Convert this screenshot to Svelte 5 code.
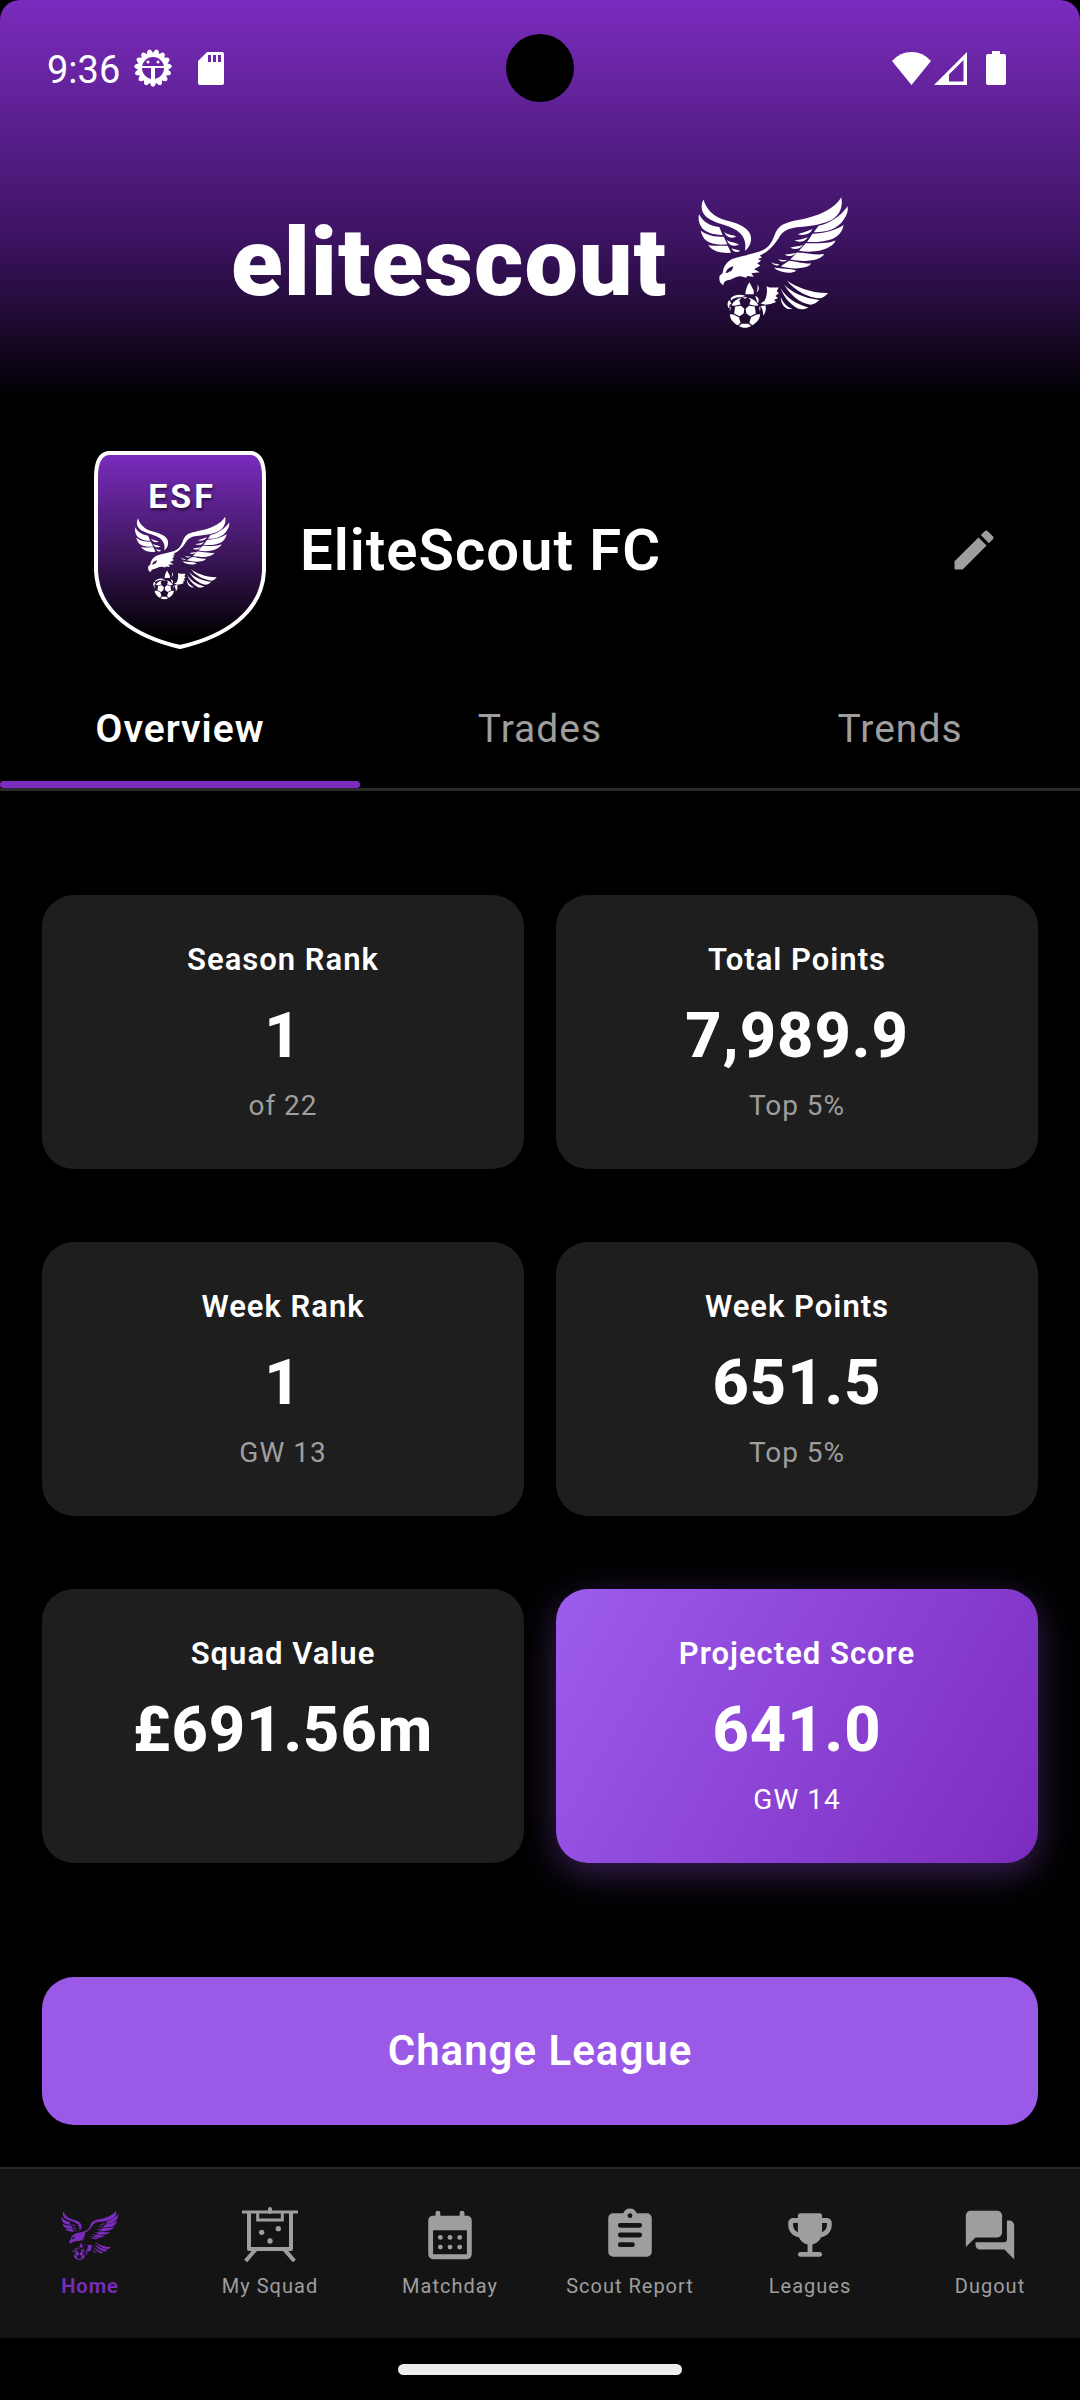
<script>
	const tabs = ['Overview', 'Trades', 'Trends'];

	const stats = [
		{ label: 'Season Rank', value: '1', note: 'of 22' },
		{ label: 'Total Points', value: '7,989.9', note: 'Top 5%' },
		{ label: 'Week Rank', value: '1', note: 'GW 13' },
		{ label: 'Week Points', value: '651.5', note: 'Top 5%' },
		{ label: 'Squad Value', value: '£691.56m', note: '' },
		{ label: 'Projected Score', value: '641.0', note: 'GW 14', featured: true }
	];

	const navItems = [
		{ id: 'home', label: 'Home' },
		{ id: 'squad', label: 'My Squad' },
		{ id: 'matchday', label: 'Matchday' },
		{ id: 'report', label: 'Scout Report' },
		{ id: 'leagues', label: 'Leagues' },
		{ id: 'dugout', label: 'Dugout' }
	];

	// teeth of the debug gear in the status bar
	const teeth = Array.from({ length: 15 }, (_, i) => i * 24 + 12);

	let activeTab = $state('Overview');
	let activeNav = $state('home');
</script>

{#snippet eagle()}
	<svg class="eagle" viewBox="60 50 450 394" fill="currentColor" aria-hidden="true">
		<!-- left wing -->
		<path d="M79 60C88 92 112 112 145 122C190 132 222 150 220 178C219 195 210 206 202 212C206 192 202 168 178 152C150 134 112 132 88 112C72 97 70 78 79 60Z" />
		<path d="M66 103C78 128 100 138 126 142L136 166C105 165 82 156 73 142C65 130 63 116 66 103Z" />
		<path d="M71 152C88 166 112 171 139 171L150 193C122 196 100 192 86 181C78 173 73 163 71 152Z" />
		<path d="M93 195C110 198 130 198 151 197L161 218C135 220 106 215 93 195Z" />
		<path d="M140 156C148 165 162 164 176 170C162 177 148 174 140 156ZM148 180C158 188 172 186 184 194C168 200 156 198 148 180ZM162 205C170 209 178 208 188 213C178 218 168 217 162 205Z" />
		<!-- head, neck and leading edge of the right wing -->
		<path fill-rule="evenodd" d="M487 54C470 84 432 104 384 116C350 124 318 126 300 146C288 160 288 184 268 202C248 220 200 224 166 236C150 243 138 258 136 278L127 286C124 298 128 310 138 314C139 304 146 300 154 299C166 297 176 286 192 288L206 292L208 287L228 289L221 279L246 276L229 267L248 256L238 250L250 241L240 237L252 232L246 226C276 212 290 192 302 174C314 152 336 144 364 142C410 138 450 130 470 112C486 98 492 74 487 54ZM168 258C156 260 148 267 145 277C150 280 154 274 160 273C164 270 166 264 168 258Z" />
		<!-- right wing feathers -->
		<path d="M506 80C484 112 452 130 420 138L406 157C440 158 476 148 494 120C504 106 508 94 506 80Z" />
		<path d="M494 136C470 152 436 160 402 162L386 186C420 188 458 184 476 168C486 160 492 148 494 136Z" />
		<path d="M470 182C448 192 410 190 382 190L362 212C394 218 430 214 450 202C460 196 468 190 470 182Z" />
		<path d="M436 222C410 226 380 217 356 217L336 238C362 244 400 244 418 236C428 232 434 228 436 222Z" />
		<path d="M398 250C370 251 350 243 332 242L308 258C330 265 358 266 376 262C388 259 395 256 398 250Z" />
		<path d="M287 262C312 266 334 264 354 271C338 282 304 278 287 262Z" />
		<path d="M402 148C384 156 368 160 358 164C378 168 394 164 402 148ZM388 172C372 178 358 180 348 182C362 188 380 186 388 172ZM374 195C358 200 346 200 336 203C350 210 364 208 374 195ZM354 218C340 222 330 222 320 223C330 231 344 229 354 218ZM300 237C310 240 318 238 327 240C318 246 308 246 300 237ZM280 245C286 252 296 250 304 254C292 258 284 254 280 245Z" />
		<!-- tail -->
		<path d="M326 300C352 318 396 338 448 337C440 346 434 350 426 353C390 352 350 330 326 300ZM318 312C340 336 376 352 422 358C414 368 404 371 396 372C362 366 336 342 318 312ZM308 324C326 352 352 370 390 380C380 386 368 386 360 384C334 370 318 350 308 324ZM308 348C314 366 326 378 342 384C322 388 308 372 308 348Z" />
		<!-- legs and claws -->
		<path d="M215 305L228 330V341H203C204 328 208 316 215 305ZM238 312C246 320 244 330 236 336C240 326 240 320 238 312ZM266 317C278 324 290 320 302 321L296 332L302 338L292 346L300 352L288 358L294 364L278 370L262 372L248 368L260 360C268 346 268 330 266 317ZM248 376L263 374C265 388 263 396 256 404C256 392 254 384 248 376ZM160 352C172 342 188 340 204 346L190 350C178 348 168 352 160 360ZM155 358C149 366 149 376 154 382L157 372L162 368ZM232 346C242 348 246 358 240 368Z" />
		<!-- ball panels -->
		<path d="M173 377L190 375L200 384L198 398L186 406L170 398ZM231 377L214 375L204 384L206 398L218 406L234 398ZM157 400L168 401L184 409L189 425L181 433C167 426 158 414 157 400ZM247 400L236 401L220 409L215 425L223 433C237 426 246 414 247 400ZM184 435L192 428H212L220 435C210 442 194 442 184 435ZM162 374C167 362 178 354 192 351L185 359L189 371L171 375ZM242 374C237 362 226 354 212 351L219 359L215 371L233 375ZM194 350H210L202 354ZM156 380L160 378L158 392ZM248 380L244 378L246 392Z" />
	</svg>
{/snippet}

{#snippet navIcon(id)}
	{#if id === 'home'}
		{@render eagle()}
	{:else if id === 'squad'}
		<svg viewBox="0 0 174 174" fill="none" stroke="currentColor" aria-hidden="true">
			<path stroke-width="9" d="M3 18H171M50 18V42H124V18" />
			<path stroke-width="12" stroke-linejoin="round" d="M24 18V129H150V18" />
			<path stroke-width="12" stroke-linecap="round" d="M87 18V9" />
			<path stroke-width="12" d="M44 130L14 165M130 130L160 165" />
			<g fill="currentColor" stroke="none">
				<circle cx="62" cy="79" r="8" />
				<circle cx="112" cy="68" r="8" />
				<circle cx="87" cy="105" r="8" />
			</g>
		</svg>
	{:else if id === 'matchday'}
		<svg viewBox="0 0 24 24" fill="currentColor" aria-hidden="true">
			<path fill-rule="evenodd" d="M6 4V3a1 1 0 0 1 2 0v1h8V3a1 1 0 0 1 2 0v1h1a2 2 0 0 1 2 2v14a2 2 0 0 1-2 2H5a2 2 0 0 1-2-2V6a2 2 0 0 1 2-2h1zM5 10v10h14V10H5z" />
			<circle cx="8" cy="13" r="1" />
			<circle cx="12" cy="13" r="1" />
			<circle cx="16" cy="13" r="1" />
			<circle cx="8" cy="17" r="1" />
			<circle cx="12" cy="17" r="1" />
			<circle cx="16" cy="17" r="1" />
		</svg>
	{:else if id === 'report'}
		<svg viewBox="0 0 24 24" fill="currentColor" aria-hidden="true">
			<path fill-rule="evenodd" d="M19 3h-4.180C14.400 1.840 13.300 1 12 1s-2.400.840-2.820 2H5a2 2 0 0 0-2 2v14a2 2 0 0 0 2 2h14a2 2 0 0 0 2-2V5a2 2 0 0 0-2-2zm-7 0a1 1 0 1 1 0 2 1 1 0 0 1 0-2zM8 7h8a1 1 0 0 1 0 2H8a1 1 0 0 1 0-2zm0 4h8a1 1 0 0 1 0 2H8a1 1 0 0 1 0-2zm0 4h5a1 1 0 0 1 0 2H8a1 1 0 0 1 0-2z" />
		</svg>
	{:else if id === 'leagues'}
		<svg viewBox="0 0 24 24" fill="currentColor" aria-hidden="true">
			<path d="M19 5h-2V4c0-.55-.45-1-1-1H8c-.55 0-1 .45-1 1v1H5c-1.1 0-2 .9-2 2v1c0 2.55 1.920 4.630 4.390 4.940.63 1.500 1.980 2.630 3.610 2.960V19H8c-.55 0-1 .45-1 1s.45 1 1 1h8c.55 0 1-.45 1-1s-.45-1-1-1h-3v-3.100c1.630-.33 2.980-1.460 3.610-2.960C19.080 12.630 21 10.550 21 8V7c0-1.100-.9-2-2-2zM5 8V7h2v3.820C5.840 10.400 5 9.300 5 8zm14 0c0 1.300-.84 2.400-2 2.820V7h2v1z" />
		</svg>
	{:else}
		<svg viewBox="0 0 24 24" fill="currentColor" aria-hidden="true">
			<path d="M20 6h-1v8c0 .55-.45 1-1 1H6v1c0 1.100.9 2 2 2h10l4 4V8c0-1.100-.9-2-2-2zM17 11V4c0-1.100-.9-2-2-2H4c-1.100 0-2 .9-2 2v13l4-4h9c1.100 0 2-.9 2-2z" />
		</svg>
	{/if}
{/snippet}

<div class="screen">
	<header class="header">
		<div class="status">
			<div class="status__group">
				<time class="status__time">9:36</time>
				<svg class="status__gear" viewBox="-19 -19 38 38" aria-hidden="true">
					<g fill="#fff">
						{#each teeth as angle}
							<path transform={`rotate(${angle})`} d="M-4 -13L-2 -17.500Q0 -20 2 -17.500L4 -13Z" />
						{/each}
					</g>
					<circle r="13" fill="none" stroke="#fff" stroke-width="4" />
					<path d="M-12 -1H12" stroke="#fff" stroke-width="2" />
					<path d="M0 0V12" stroke="#fff" stroke-width="4" />
					<circle cx="-5" cy="-6" r="1.500" fill="#fff" />
					<circle cx="5" cy="-6" r="1.500" fill="#fff" />
				</svg>
				<svg class="status__card" viewBox="0 0 26 33" aria-hidden="true">
					<path fill="#fff" fill-rule="evenodd" d="M9 0H24Q26 0 26 2V31Q26 33 24 33H2Q0 33 0 31V9ZM10 3V10H13V3ZM15 3V10H18V3ZM20 3V10H23V3Z" />
				</svg>
			</div>
			<span class="status__camera"></span>
			<div class="status__group">
				<svg class="status__wifi" viewBox="0 0 39 33" aria-hidden="true">
					<path fill="#fff" d="M0 9Q8 0 19.500 0T39 9L19.500 33Z" />
				</svg>
				<svg class="status__signal" viewBox="0 0 33 33" aria-hidden="true">
					<path fill="#fff" fill-rule="evenodd" d="M33 0V33H0ZM29.500 8L15 22.500V29.500H29.500Z" />
				</svg>
				<svg class="status__battery" viewBox="0 0 20 34" aria-hidden="true">
					<path fill="#fff" d="M6 0H14V3H18Q20 3 20 5V32Q20 34 18 34H2Q0 34 0 32V5Q0 3 2 3H6Z" />
				</svg>
			</div>
		</div>
		<div class="brand">
			<h1 class="brand__name">elitescout</h1>
			<div class="brand__logo">{@render eagle()}</div>
		</div>
	</header>

	<main class="main">
		<section class="club">
			<div class="badge">
				<svg class="badge__shield" viewBox="0 0 172 198" aria-hidden="true">
					<defs>
						<linearGradient id="shield" x1="0" y1="0" x2="0" y2="1">
							<stop offset="0" stop-color="#7b2cbf" />
							<stop offset="0.5" stop-color="#3f175f" />
							<stop offset="0.95" stop-color="#000" />
						</linearGradient>
					</defs>
					<path
						fill="url(#shield)"
						stroke="#fff"
						stroke-width="4"
						stroke-linejoin="round"
						d="M14 2H158Q170 4 170 26V120C168 162 130 186 86 196C42 186 4 162 2 120V26Q2 4 14 2Z"
					/>
				</svg>
				<div class="badge__content">
					<span class="badge__text">ESF</span>
					<div class="badge__logo">{@render eagle()}</div>
				</div>
			</div>
			<h2 class="club__name">EliteScout FC</h2>
			<button class="club__edit" type="button" aria-label="Edit club">
				<svg viewBox="0 0 24 24" fill="currentColor" aria-hidden="true">
					<path d="M3 17.460v3.040c0 .28.22.5.5.5h3.040c.13 0 .26-.05.35-.15L17.810 9.940l-3.750-3.750L3.150 17.100c-.1.1-.15.22-.15.36zM20.710 7.040c.39-.39.39-1.020 0-1.410l-2.340-2.340c-.39-.39-1.020-.39-1.410 0l-1.830 1.830 3.750 3.750 1.830-1.830z" />
				</svg>
			</button>
		</section>

		<div class="tabs" role="tablist">
			{#each tabs as tab}
				<button
					class="tab"
					class:is-active={tab === activeTab}
					type="button"
					role="tab"
					aria-selected={tab === activeTab}
					onclick={() => (activeTab = tab)}
				>
					{tab}
				</button>
			{/each}
		</div>

		<section class="stats">
			{#each stats as stat}
				<article class="stat" class:is-featured={stat.featured}>
					<h3 class="stat__label">{stat.label}</h3>
					<p class="stat__value">{stat.value}</p>
					{#if stat.note}
						<p class="stat__note">{stat.note}</p>
					{/if}
				</article>
			{/each}
		</section>

		<button class="change-league" type="button">Change League</button>
	</main>

	<nav class="nav">
		{#each navItems as item}
			<a
				class="nav__item"
				class:is-active={item.id === activeNav}
				href={`#${item.id}`}
				onclick={() => (activeNav = item.id)}
			>
				<span class="nav__icon">{@render navIcon(item.id)}</span>
				{item.label}
			</a>
		{/each}
	</nav>

	<div class="gesture"><span class="gesture__bar"></span></div>
</div>

<style>
	:global(body) {
		margin: 0;
		background: #000;
	}

	.screen {
		min-height: 100vh;
		display: flex;
		flex-direction: column;
		background: #000;
		color: #fff;
		font-family: Roboto, sans-serif;
	}

	h1,
	h2,
	h3,
	p {
		margin: 0;
	}

	button {
		padding: 0;
		border: 0;
		background: none;
		color: inherit;
		font-family: inherit;
		cursor: pointer;
	}

	svg {
		display: block;
	}

	.eagle {
		width: 100%;
	}

	.header {
		padding-bottom: 72px;
		border-radius: 20px 20px 0 0;
		background: linear-gradient(#7b2cbf, #3c1361 60%, #000);
	}

	.status {
		position: relative;
		display: flex;
		align-items: center;
		justify-content: space-between;
		height: 136px;
		padding: 0 74px 0 47px;
	}

	.status__group {
		display: flex;
		align-items: center;
	}

	.status__time {
		padding-top: 4px;
		font-size: 38px;
		line-height: 44px;
	}

	.status__gear {
		width: 38px;
		margin-left: 14px;
	}

	.status__card {
		width: 26px;
		margin-left: 26px;
	}

	.status__camera {
		position: absolute;
		top: 34px;
		left: 50%;
		width: 68px;
		height: 68px;
		margin-left: -34px;
		border-radius: 50%;
		background: #000;
	}

	.status__wifi {
		width: 39px;
	}

	.status__signal {
		width: 33px;
		margin-left: 3px;
	}

	.status__battery {
		width: 20px;
		margin-left: 19px;
	}

	.brand {
		display: flex;
		align-items: center;
		justify-content: center;
		gap: 30px;
		padding-top: 60px;
	}

	.brand__name {
		font-size: 95px;
		font-weight: 900;
		line-height: 132px;
		letter-spacing: 1px;
	}

	.brand__logo {
		width: 152px;
	}

	.club {
		display: flex;
		align-items: center;
		gap: 34px;
		padding: 50px 80px 40px 94px;
	}

	.badge {
		position: relative;
		flex: none;
		width: 172px;
	}

	.badge__content {
		position: absolute;
		inset: 0;
		display: flex;
		flex-direction: column;
		align-items: center;
		padding: 26px 0 0 4px;
	}

	.badge__text {
		font-size: 34px;
		font-weight: 700;
		line-height: 39px;
		letter-spacing: 3px;
		text-shadow: 1px 2px 3px rgba(0, 0, 0, 0.6);
	}

	.badge__logo {
		width: 96px;
	}

	.club__name {
		flex: 1;
		font-size: 58px;
		font-weight: 600;
		line-height: 72px;
		letter-spacing: 1px;
	}

	.club__edit {
		color: #9e9e9e;
	}

	.club__edit svg {
		width: 52px;
	}

	.tabs {
		display: grid;
		grid-template-columns: repeat(3, 1fr);
		border-bottom: 3px solid #2a2a2a;
	}

	.tab {
		padding-top: 18px;
		color: #9e9e9e;
		font-size: 39px;
		line-height: 44px;
		letter-spacing: 1px;
	}

	.tab::after {
		content: '';
		display: block;
		height: 7px;
		margin-top: 30px;
		border-radius: 4px;
	}

	.tab.is-active {
		color: #fff;
		font-weight: 600;
	}

	.tab.is-active::after {
		background: #7b2cbf;
	}

	.stats {
		display: grid;
		grid-template-columns: 1fr 1fr;
		gap: 73px 32px;
		padding: 104px 42px 114px;
	}

	.stat {
		padding: 42px 16px;
		border-radius: 32px;
		background: #1e1e1e;
		text-align: center;
	}

	.stat.is-featured {
		background: linear-gradient(120deg, #9d5cec, #7b2cbf);
		box-shadow: 0 10px 36px rgba(155, 89, 232, 0.36);
	}

	.stat__label {
		font-size: 31px;
		font-weight: 600;
		line-height: 46px;
		letter-spacing: 1px;
	}

	.stat__value {
		margin: 11px 0 7px;
		font-size: 63px;
		font-weight: 800;
		line-height: 84px;
		letter-spacing: 1px;
	}

	.stat__note {
		color: #9e9e9e;
		font-size: 28px;
		line-height: 42px;
		letter-spacing: 1px;
	}

	.is-featured .stat__note {
		color: #fff;
	}

	.change-league {
		display: block;
		width: calc(100% - 84px);
		margin: 0 42px 42px;
		padding: 46px 0;
		border-radius: 32px;
		background: #9b59e8;
		font-size: 42px;
		font-weight: 600;
		line-height: 56px;
		letter-spacing: 1px;
	}

	.nav {
		display: grid;
		grid-template-columns: repeat(6, 1fr);
		padding: 37px 0;
		border-top: 2px solid #2a2a2a;
		background: #141414;
	}

	.nav__item {
		display: flex;
		flex-direction: column;
		align-items: center;
		gap: 7px;
		color: #9e9e9e;
		font-size: 20px;
		line-height: 30px;
		letter-spacing: 1px;
		text-decoration: none;
		white-space: nowrap;
	}

	.nav__item.is-active {
		color: #7b2cbf;
		font-weight: 600;
	}

	.nav__icon {
		display: flex;
		align-items: center;
		width: 58px;
		height: 58px;
	}

	.nav__icon svg {
		width: 58px;
	}

	.gesture {
		display: flex;
		justify-content: center;
		padding: 26px 0;
	}

	.gesture__bar {
		width: 284px;
		height: 11px;
		border-radius: 6px;
		background: #ececec;
	}
</style>
